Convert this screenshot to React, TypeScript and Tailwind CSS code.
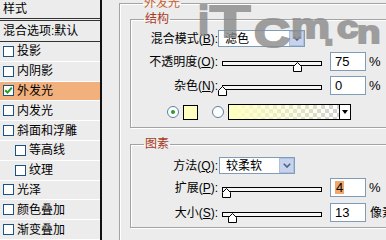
import React from "react";

const F = "font-['Liberation_Sans','Noto_Sans_CJK_SC',sans-serif]";

function Check({ checked }: { checked?: boolean }) {
  return (
    <span className="w-[11px] h-[11px] border border-[#1c5180] bg-white flex items-center justify-center shrink-0">
      {checked && (
        <svg width="9" height="9" viewBox="0 0 9 9">
          <path d="M1.2 4.2 L3.5 6.6 L7.8 1.6" stroke="#21a121" strokeWidth="2" fill="none" />
        </svg>
      )}
    </span>
  );
}

function Item({ label, checked, sub, active }: { label: string; checked?: boolean; sub?: boolean; active?: boolean }) {
  return (
    <div
      className={`h-[20px] flex items-center border-b border-white ${sub ? "pl-[15px]" : "pl-[3px]"} ${
        active ? "bg-[#f2b07c]" : ""
      }`}
    >
      <Check checked={checked} />
      <span className="ml-[3px] text-[12px] leading-none text-black">{label}</span>
    </div>
  );
}

function Thumb({ cls }: { cls: string }) {
  return (
    <svg className={`absolute top-[1px] ${cls}`} width="9" height="10" viewBox="0 0 9 10">
      <path d="M0.5 9.5V4.5L4.5 0.5L8.5 4.5V9.5Z" fill="#fff" stroke="#000" />
    </svg>
  );
}

function Slider({ cls }: { cls: string }) {
  return (
    <div className="relative w-[100px] h-[11px] self-start mt-[9px] ml-[4px] shrink-0">
      <div className="h-[5px] border border-black bg-[#f6f6f6]" />
      <Thumb cls={cls} />
    </div>
  );
}

function Num({ children }: { children: React.ReactNode }) {
  return (
    <div className="ml-[8px] w-[36px] h-[19px] border border-[#7f9db9] bg-white flex items-center pl-[4px] text-[13px] leading-none text-black shrink-0">
      {children}
    </div>
  );
}

function Label({ children }: { children: React.ReactNode }) {
  return <span className="w-[87px] text-right text-[12px] leading-none text-black shrink-0 whitespace-nowrap">{children}</span>;
}

function U({ children }: { children: React.ReactNode }) {
  return <span className="underline underline-offset-[1px]">{children}</span>;
}

function Select({ w, text }: { w: string; text: string }) {
  return (
    <div className={`${w} h-[17px] border border-[#7f9db9] bg-white flex items-center shrink-0`}>
      <span className="pl-[6px] text-[12px] leading-none text-black">{text}</span>
      <div className="ml-auto w-[15px] h-[15px] bg-[#c7d3ec] border border-[#aebfe0] flex items-center justify-center">
        <svg width="8" height="5" viewBox="0 0 8 5">
          <path d="M0.8 0.8 L4 4 L7.2 0.8" stroke="#4d6185" strokeWidth="1.6" fill="none" />
        </svg>
      </div>
    </div>
  );
}

function Radio({ checked }: { checked?: boolean }) {
  return (
    <span className="w-[12px] h-[12px] rounded-full border border-[#5a7fa6] bg-white flex items-center justify-center shrink-0">
      {checked && <span className="w-[4px] h-[4px] rounded-full bg-[#21a121]" />}
    </span>
  );
}

export default function App() {
  return (
    <div className={`w-[386px] h-[240px] overflow-hidden relative flex bg-[#ececec] ${F}`}>
      {/* left list */}
      <div className="w-[102px] h-full border-r-2 border-[#111] shrink-0 flex flex-col">
        <div className="h-[21px] border-b-[3px] border-double border-[#333] pl-[3px] flex items-center text-[12px] leading-none text-black shrink-0">
          样式
        </div>
        <div className="h-[21px] border-b border-[#333] pl-[3px] flex items-center text-[12px] leading-none text-black shrink-0">
          混合选项:默认
        </div>
        <Item label="投影" />
        <Item label="内阴影" />
        <Item label="外发光" checked active />
        <Item label="内发光" />
        <Item label="斜面和浮雕" />
        <Item label="等高线" sub />
        <Item label="纹理" sub />
        <Item label="光泽" />
        <Item label="颜色叠加" />
        <Item label="渐变叠加" />
      </div>

      {/* right side */}
      <div className="pl-[17px] shrink-0">
        <fieldset className="-mt-[3px] w-[290px] border border-[#a3a3a3] shadow-[inset_1px_1px_0_#fff,1px_1px_0_#fff] pl-[10px] pt-[4px] pb-[30px]">
          <legend className="ml-[13px] px-[1px] text-[12px] leading-[12px] text-[#c8602f]">外发光</legend>

          <fieldset className="w-[270px] border border-[#a3a3a3] shadow-[inset_1px_1px_0_#fff,1px_1px_0_#fff] pt-[5px] pb-[7px]">
            <legend className="ml-[13px] px-[1px] text-[12px] leading-[12px] text-[#a63a1e]">结构</legend>

            <div className="h-[17px] flex items-center">
              <Label>
                混合模式(<U>B</U>):
              </Label>
              <Select w="w-[87px]" text="滤色" />
            </div>

            <div className="mt-[5px] h-[19px] flex items-center">
              <Label>
                不透明度(<U>O</U>):
              </Label>
              <Slider cls="left-[71px]" />
              <Num>75</Num>
              <span className="ml-[3px] text-[13px] leading-none text-black">%</span>
            </div>

            <div className="mt-[5px] h-[19px] flex items-center">
              <Label>
                杂色(<U>N</U>):
              </Label>
              <Slider cls="left-[-4px]" />
              <Num>0</Num>
              <span className="ml-[3px] text-[13px] leading-none text-black">%</span>
            </div>

            <div className="mt-[9px] h-[16px] flex items-center pl-[36px]">
              <Radio checked />
              <span className="ml-[4px] w-[15px] h-[15px] border border-black bg-[#ffffc0] shrink-0" />
              <span className="ml-[14px]">
                <Radio />
              </span>
              <div className="ml-[4px] w-[123px] h-[16px] border border-black flex shrink-0">
                <div className="flex-1 bg-[image:repeating-conic-gradient(#d2d2d2_0_25%,#ffffff_0_50%)] bg-[length:8px_8px]">
                  <div className="h-full bg-linear-to-r from-[#ffffc0] to-transparent" />
                </div>
                <div className="w-[11px] border-l border-black bg-white flex items-center justify-center">
                  <svg width="6" height="4" viewBox="0 0 6 4">
                    <path d="M0 0H6L3 4Z" fill="#000" />
                  </svg>
                </div>
              </div>
            </div>
          </fieldset>

          <fieldset className="mt-[10px] w-[270px] border border-[#a3a3a3] shadow-[inset_1px_1px_0_#fff,1px_1px_0_#fff] pt-[7px] pb-[5px]">
            <legend className="ml-[13px] px-[1px] text-[12px] leading-[12px] text-[#a63a1e]">图素</legend>

            <div className="h-[17px] flex items-center">
              <Label>
                方法(<U>Q</U>):
              </Label>
              <span className="ml-[1px]">
                <Select w="w-[76px]" text="较柔软" />
              </span>
            </div>

            <div className="mt-[4px] h-[19px] flex items-center">
              <Label>
                扩展(<U>P</U>):
              </Label>
              <Slider cls="left-[0px]" />
              <Num>
                <span className="bg-[#f1a86d] px-[1px]">4</span>
              </Num>
              <span className="ml-[3px] text-[13px] leading-none text-black">%</span>
            </div>

            <div className="mt-[6px] h-[19px] flex items-center">
              <Label>
                大小(<U>S</U>):
              </Label>
              <Slider cls="left-[6px]" />
              <Num>13</Num>
              <span className="ml-[4px] text-[12px] leading-none text-black whitespace-nowrap">像素</span>
            </div>
          </fieldset>
        </fieldset>
      </div>

      {/* watermark */}
      <div className="absolute inset-0 pointer-events-none font-['Liberation_Sans',sans-serif] font-bold text-[#8a8a8a] opacity-80 leading-none [-webkit-text-stroke:2px_#8a8a8a]">
        <span className="absolute left-[198px] top-[1px] text-[40px]">i</span>
        <span className="absolute left-[210px] top-[0px] text-[44px] inline-block scale-x-[1.5] origin-left">T</span>
        <span className="absolute left-[254px] top-[13px] text-[40px] inline-block scale-x-[1.25] origin-left">C</span>
        <span className="absolute left-[291px] top-[8px] text-[35px] inline-block scale-x-[1.25] origin-left">m</span>
        <span className="absolute left-[324px] top-[15px] text-[35px]">.</span>
        <span className="absolute left-[337px] top-[11px] text-[32px] inline-block scale-x-[1.2] origin-left">c</span>
        <span className="absolute left-[357px] top-[16px] text-[32px] inline-block scale-x-[1.2] origin-left">n</span>
      </div>
    </div>
  );
}
